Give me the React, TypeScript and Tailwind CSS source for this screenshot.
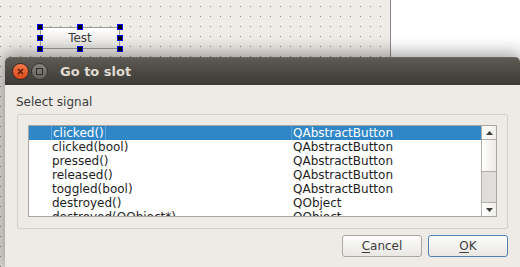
const signals: [string, string][] = [
  ["clicked()", "QAbstractButton"],
  ["clicked(bool)", "QAbstractButton"],
  ["pressed()", "QAbstractButton"],
  ["released()", "QAbstractButton"],
  ["toggled(bool)", "QAbstractButton"],
  ["destroyed()", "QObject"],
  ["destroyed(QObject*)", "QObject"],
];

function Handle({ className }: { className: string }) {
  return <span className={"absolute w-[6px] h-[6px] bg-black border border-[#0000ff] " + className} />;
}

function Designer() {
  return (
    <div className="w-[391px] h-full shrink-0 border-r border-[#8a8a8a] bg-[#efebe7] bg-[radial-gradient(circle_at_0.5px_0.5px,#8e8b87_0.7px,transparent_0.8px)] bg-[size:10px_10px] bg-[position:0px_6px] pl-[40px] pt-[27px]">
      <div className="relative w-[80px] h-[22px]">
        <div className="w-full h-full border border-[#9a9a9a] bg-gradient-to-b from-white to-[#e4e2df] flex items-center justify-center text-[12px] text-[#3c3c3c]">
          Test
        </div>
        <Handle className="left-[-3px] top-[-3px]" />
        <Handle className="left-[37px] top-[-3px]" />
        <Handle className="left-[77px] top-[-3px]" />
        <Handle className="left-[-3px] top-[8px]" />
        <Handle className="left-[77px] top-[8px]" />
        <Handle className="left-[-3px] top-[19px]" />
        <Handle className="left-[37px] top-[19px]" />
        <Handle className="left-[77px] top-[19px]" />
      </div>
    </div>
  );
}

function TitleBar() {
  return (
    <div className="h-[28px] rounded-t-[5px] bg-gradient-to-b from-[#5e5a53] to-[#3b3a36] border-t border-[#6a665e] flex items-center pl-[7px]">
      <div className="w-[17px] h-[17px] rounded-full bg-gradient-to-b from-[#f3784a] to-[#d9481a] border border-[#3a2a22] flex items-center justify-center">
        <svg width="7" height="7" viewBox="0 0 7 7">
          <path d="M1 1L6 6M6 1L1 6" stroke="#4a1a08" strokeWidth="1.3" />
        </svg>
      </div>
      <div className="ml-[2px] w-[17px] h-[17px] rounded-full bg-gradient-to-b from-[#85827c] to-[#66635e] border border-[#34332f] flex items-center justify-center">
        <span className="w-[7px] h-[7px] border border-[#2e2d2a] bg-[#77746f]" />
      </div>
      <span className="ml-[12px] text-[13px] font-bold text-[#dfdbd2] leading-none">Go to slot</span>
    </div>
  );
}

function Arrow({ up }: { up?: boolean }) {
  return (
    <svg width="7" height="4" viewBox="0 0 7 4">
      <path d={up ? "M0 4L3.5 0L7 4Z" : "M0 0L7 0L3.5 4Z"} fill="#3c3c3c" />
    </svg>
  );
}

function SignalList() {
  return (
    <div className="h-[92px] border border-[#a9a6a1] bg-white flex overflow-hidden">
      <div className="flex-1 overflow-hidden">
        {signals.map(([sig, cls], i) => {
          const sel = i === 0;
          return (
            <div
              key={i}
              className={
                "h-[14px] flex text-[12px] leading-[14px] whitespace-nowrap " +
                (sel ? "bg-[#3087c7] text-white" : "text-[#1e1e1e]")
              }
            >
              <div className="w-[262px] shrink-0 pl-[22px]">
                <span className={"inline-block h-[14px] px-px " + (sel ? "border-x border-[#62a7dc]" : "")}>{sig}</span>
              </div>
              <div className={"pl-px border-l " + (sel ? "border-[#5c9fd6]" : "border-transparent")}>{cls}</div>
            </div>
          );
        })}
      </div>
      <div className="w-[15px] shrink-0 border-l border-[#b2afaa] flex flex-col">
        <div className="h-[14px] border-b border-[#b2afaa] bg-gradient-to-r from-white to-[#efeeec] flex items-center justify-center">
          <Arrow up />
        </div>
        <div className="h-[32px] border-b border-[#b2afaa] bg-gradient-to-r from-white to-[#eceae7]" />
        <div className="h-[30px] bg-[#e0dedb]" />
        <div className="flex-1 border-t border-[#b2afaa] bg-gradient-to-r from-white to-[#efeeec] flex items-center justify-center">
          <Arrow />
        </div>
      </div>
    </div>
  );
}

function Dialog() {
  return (
    <div className="absolute left-[5px] top-[57px] w-[515px] h-[210px] rounded-t-[5px] bg-[#eeebe7] shadow-[0_0_18px_3px_rgba(0,0,0,0.4)]">
      <TitleBar />
      <div className="pl-[12px] text-[#3c3c3c]">
        <div className="mt-[10px] -ml-px h-[14px] text-[12px] leading-[14px]">Select signal</div>
        <div className="mt-[5px] w-[491px] h-[115px] border border-[#d4d0cb] rounded-[2px] p-[10px]">
          <SignalList />
        </div>
        <div className="mt-[6px] w-[491px] flex justify-end gap-[6px]">
          <button className="w-[80px] h-[22px] rounded-[3px] border border-[#aaa7a2] bg-gradient-to-b from-[#fdfdfc] to-[#e9e7e4] text-[12px] text-[#3c3c3c]">
            <span className="underline underline-offset-2">C</span>ancel
          </button>
          <button className="w-[80px] h-[22px] rounded-[3px] border border-[#4f82b3] bg-gradient-to-b from-[#fdfdfc] to-[#e9e7e4] text-[12px] text-[#3c3c3c]">
            <span className="underline underline-offset-2">O</span>K
          </button>
        </div>
      </div>
    </div>
  );
}

export default function App() {
  return (
    <div className="relative w-[520px] h-[267px] overflow-hidden flex font-['DejaVu_Sans',sans-serif]">
      <Designer />
      <div className="flex-1 bg-white" />
      <Dialog />
    </div>
  );
}
